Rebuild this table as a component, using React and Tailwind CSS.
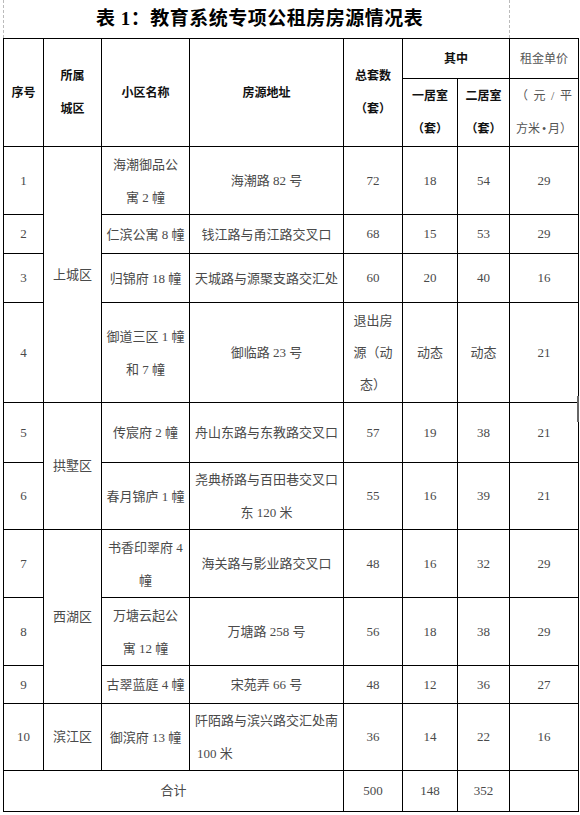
const body = '"Liberation Serif", "Noto Sans CJK SC", serif';

const rows = [
  { no: '1', name: ['海潮御品公', '寓 2 幢'], addr: ['海潮路 82 号'], total: ['72'], one: '18', two: '54', rent: '29', h: 'h-[68px]', district: '上城区', span: 4 },
  { no: '2', name: ['仁滨公寓 8 幢'], addr: ['钱江路与甬江路交叉口'], total: ['68'], one: '15', two: '53', rent: '29', h: 'h-[39px]' },
  { no: '3', name: ['归锦府 18 幢'], addr: ['天城路与源聚支路交汇处'], total: ['60'], one: '20', two: '40', rent: '16', h: 'h-[49px]' },
  { no: '4', name: ['御道三区 1 幢', '和 7 幢'], addr: ['御临路 23 号'], total: ['退出房', '源（动', '态）'], one: '动态', two: '动态', rent: '21', h: 'h-[100px]' },
  { no: '5', name: ['传宸府 2 幢'], addr: ['舟山东路与东教路交叉口'], total: ['57'], one: '19', two: '38', rent: '21', h: 'h-[60px]', district: '拱墅区', span: 2 },
  { no: '6', name: ['春月锦庐 1 幢'], addr: ['尧典桥路与百田巷交叉口', '东 120 米'], total: ['55'], one: '16', two: '39', rent: '21', h: 'h-[67px]' },
  { no: '7', name: ['书香印翠府 4', '幢'], addr: ['海关路与影业路交叉口'], total: ['48'], one: '16', two: '32', rent: '29', h: 'h-[68px]', district: '西湖区', span: 3 },
  { no: '8', name: ['万塘云起公', '寓 12 幢'], addr: ['万塘路 258 号'], total: ['56'], one: '18', two: '38', rent: '29', h: 'h-[68px]' },
  { no: '9', name: ['古翠蓝庭 4 幢'], addr: ['宋苑弄 66 号'], total: ['48'], one: '12', two: '36', rent: '27', h: 'h-[38px]' },
  { no: '10', name: ['御滨府 13 幢'], addr: ['阡陌路与滨兴路交汇处南', '100 米'], total: ['36'], one: '14', two: '22', rent: '16', h: 'h-[67px]', district: '滨江区', span: 1, addrLeft: true },
];

function Lines({ items, left }) {
  return (
    <div className={`leading-[33px] ${left ? 'text-left px-[6px]' : 'text-center'}`}>
      {items.map((t, i) => (
        <div key={i} className="whitespace-nowrap">{t}</div>
      ))}
    </div>
  );
}

const td = 'border border-black p-0 align-middle text-center';
const th = 'border border-black p-0 align-middle text-center font-bold text-[12px] text-[#111]';

export default function App() {
  return (
    <div className="w-[580px] h-[815px] bg-white relative overflow-hidden" style={{ fontFamily: body }}>
      <div className="relative h-[38px] flex items-center pl-[96px]">
        <span className="text-[19px] font-bold text-black tracking-[0.5px]">表 1：教育系统专项公租房房源情况表</span>
        <div className="absolute left-[3px] top-0 h-[38px] border-l border-dashed border-[#bbb]" />
        <div className="absolute left-[509px] top-0 h-[38px] border-l border-dashed border-[#bbb]" />
      </div>

      <table className="ml-[3px] w-[575px] table-fixed border-collapse">
        <colgroup>
          <col className="w-[40px]" />
          <col className="w-[58px]" />
          <col className="w-[88px]" />
          <col className="w-[154px]" />
          <col className="w-[59px]" />
          <col className="w-[55px]" />
          <col className="w-[52px]" />
          <col className="w-[69px]" />
        </colgroup>
        <thead>
          <tr className="h-[40px]">
            <th rowSpan={2} className={th}>序号</th>
            <th rowSpan={2} className={th}>
              <Lines items={['所属', '城区']} />
            </th>
            <th rowSpan={2} className={th}>小区名称</th>
            <th rowSpan={2} className={th}>房源地址</th>
            <th rowSpan={2} className={th}>
              <Lines items={['总套数', '（套）']} />
            </th>
            <th colSpan={2} className={th}>其中</th>
            <th className={`${td} text-[12px] text-[#555] font-normal`}>租金单价</th>
          </tr>
          <tr className="h-[68px]">
            <th className={th}>
              <Lines items={['一居室', '（套）']} />
            </th>
            <th className={th}>
              <Lines items={['二居室', '（套）']} />
            </th>
            <th className={`${td} text-[12px] text-[#555] font-normal`}>
              <div className="leading-[33px] px-[6px]">
                <div className="flex justify-between"><span>（</span><span>元</span><span>/</span><span>平</span></div>
                <div className="flex justify-between"><span>方米</span><span>•</span><span>月）</span></div>
              </div>
            </th>
          </tr>
        </thead>
        <tbody className="text-[13px] text-[#4a4a4a]">
          {rows.map((r) => (
            <tr key={r.no} className={r.h}>
              <td className={td}>{r.no}</td>
              {r.district && (
                <td rowSpan={r.span} className={td}>{r.district}</td>
              )}
              <td className={td}>
                <Lines items={r.name} />
              </td>
              <td className={td}>
                {r.addrLeft ? (
                  <div className="leading-[33px]">
                    <div className="whitespace-nowrap text-center">{r.addr[0]}</div>
                    <div className="whitespace-nowrap text-left pl-[7px]">{r.addr[1]}</div>
                  </div>
                ) : (
                  <Lines items={r.addr} />
                )}
              </td>
              <td className={td}>
                {r.total.length > 1 ? (
                  <div className="leading-[32px]">
                    {r.total.map((t, i) => (
                      <div key={i} className="whitespace-nowrap">{t}</div>
                    ))}
                  </div>
                ) : (
                  r.total[0]
                )}
              </td>
              <td className={td}>{r.one}</td>
              <td className={td}>{r.two}</td>
              <td className={td}>{r.rent}</td>
            </tr>
          ))}
          <tr className="h-[41px]">
            <td colSpan={4} className={td}>合计</td>
            <td className={td}>500</td>
            <td className={td}>148</td>
            <td className={td}>352</td>
            <td className={td}></td>
          </tr>
        </tbody>
      </table>

      <div className="absolute left-[577px] top-[396px] w-[2px] h-[26px] bg-[#666]" />
    </div>
  );
}
